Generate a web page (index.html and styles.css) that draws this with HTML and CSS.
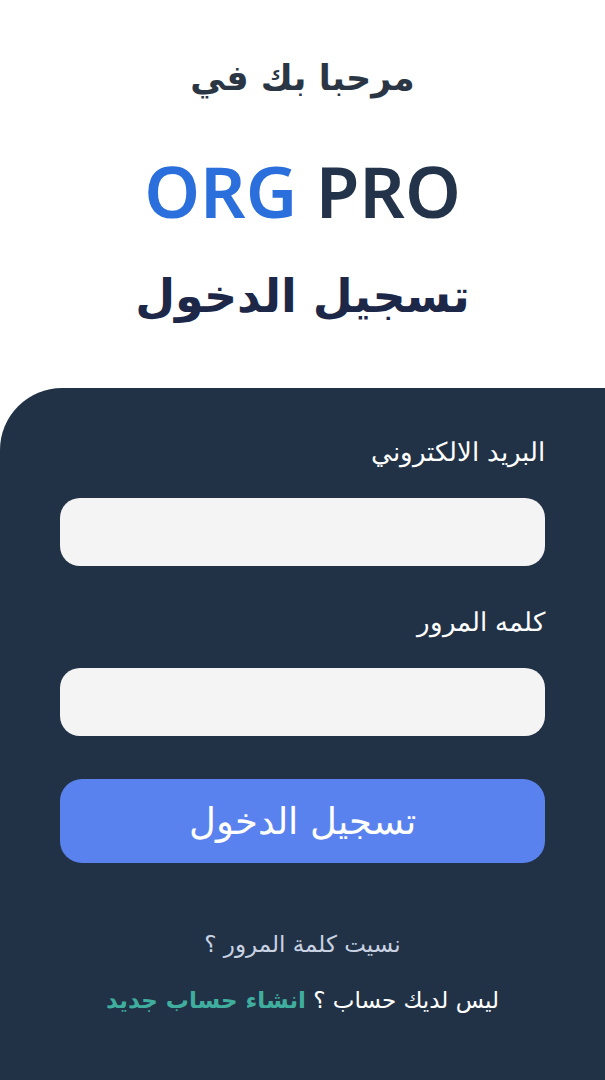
FILE: index.html
```html
<!DOCTYPE html>
<html lang="ar" dir="rtl">
<head>
<meta charset="utf-8">
<title>ORG PRO - تسجيل الدخول</title>
<link rel="stylesheet" href="styles.css">
</head>
<body>
<div class="page">
  <header class="hero">
    <h2 class="welcome">مرحبا بك في</h2>
    <h1 class="brand" dir="ltr"><span class="org">ORG</span> <span class="pro">PRO</span></h1>
    <h2 class="title">تسجيل الدخول</h2>
  </header>
  <main class="panel">
    <form class="form">
      <label class="label" for="email">البريد الالكتروني</label>
      <input class="field" id="email" type="email">
      <label class="label" for="pass">كلمه المرور</label>
      <input class="field" id="pass" type="password">
      <button class="submit" type="button">تسجيل الدخول</button>
    </form>
    <p class="forgot">نسيت كلمة المرور ؟</p>
    <p class="signup">ليس لديك حساب ؟ <a class="signup-link" href="#">انشاء حساب جديد</a></p>
  </main>
</div>
</body>
</html>
```
FILE: styles.css
```css
* { box-sizing: border-box; }
html, body { margin: 0; padding: 0; background: #ffffff; }
body { font-family: "DejaVu Sans", "Noto Sans", sans-serif; }
.page { width: 605px; height: 1080px; display: flex; flex-direction: column; overflow: hidden; }
.hero { display: flex; flex-direction: column; align-items: center; padding-top: 55px; height: 388px; }
.welcome { margin: 0; font-size: 35px; font-weight: bold; color: #2b3645; line-height: 46px; }
.brand { margin: 50px 0 0; font-family: "Noto Sans", sans-serif; font-size: 71px; font-weight: 600; line-height: 80px; }
.org { color: #2a6fdb; }
.pro { color: #22334a; }
.title { margin: 36px 0 0; font-size: 46px; font-weight: bold; color: #1d2848; line-height: 58px; }
.panel { flex: 1; background: #223246; border-top-left-radius: 62px; padding: 0 60px; }
.form { display: flex; flex-direction: column; padding-top: 49px; }
.label { color: #ffffff; font-size: 26px; font-weight: 300; line-height: 30px; text-align: right; }
.field { margin-top: 31px; margin-bottom: 41px; height: 68px; border: none; border-radius: 20px; background: #f4f4f4; width: 100%; }
.submit { margin-top: 2px; height: 84px; border: none; border-radius: 22px; background: #5a82ee; color: #ffffff; font-family: inherit; font-size: 37px; font-weight: 300; }
.forgot { margin: 66px 0 0; text-align: center; color: #c9d2e3; font-size: 23px; line-height: 30px; }
.signup { margin: 26px 0 0; text-align: center; color: #ffffff; font-size: 23px; line-height: 30px; }
.signup-link { color: #3fae9e; font-weight: bold; text-decoration: none; }
```
